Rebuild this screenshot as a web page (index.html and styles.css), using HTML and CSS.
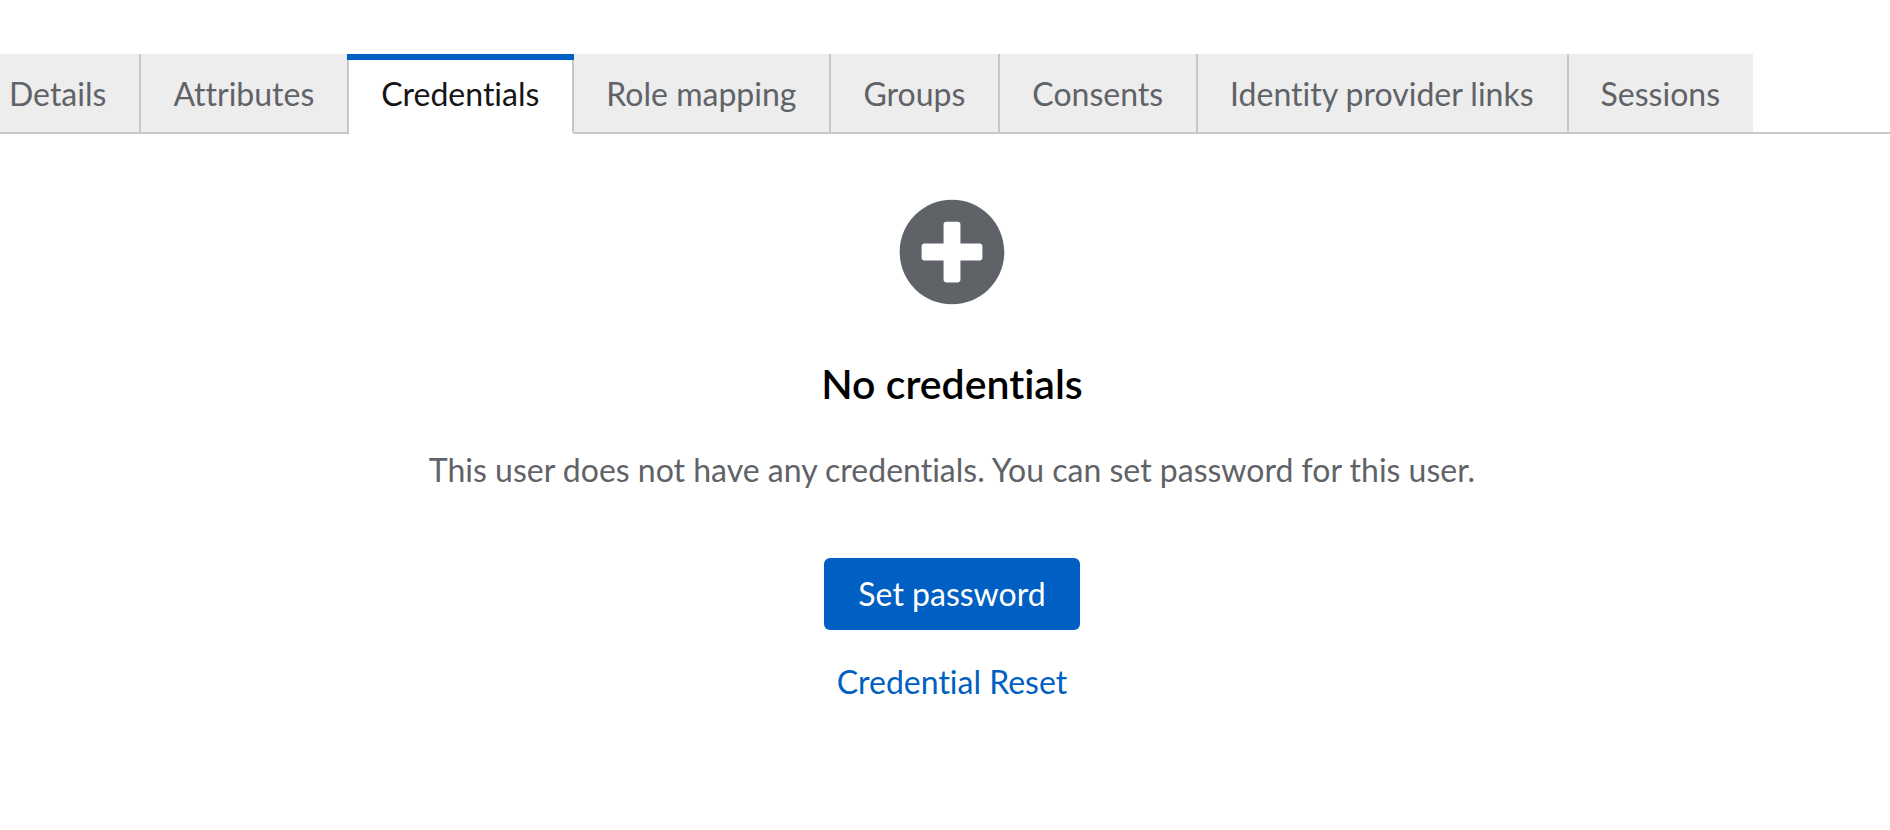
FILE: index.html
```html
<!DOCTYPE html>
<html lang="en">
<head>
    <meta charset="UTF-8">
    <meta name="viewport" content="width=device-width, initial-scale=1.0">
    <title>User credentials</title>
    <link rel="stylesheet" href="styles.css">
</head>
<body>
<nav class="tabs" aria-label="User details">
    <button type="button" class="tab">Details</button>
    <button type="button" class="tab">Attributes</button>
    <button type="button" class="tab current" aria-current="page">Credentials</button>
    <button type="button" class="tab">Role mapping</button>
    <button type="button" class="tab">Groups</button>
    <button type="button" class="tab">Consents</button>
    <button type="button" class="tab">Identity provider links</button>
    <button type="button" class="tab">Sessions</button>
</nav>

<main class="empty-state">
    <svg class="empty-icon" viewBox="0 0 512 512" aria-hidden="true">
        <path fill="currentColor" d="M256 8C119 8 8 119 8 256s111 248 248 248 248-111 248-248S393 8 256 8zm144 276c0 6.600-5.400 12-12 12h-92v92c0 6.600-5.400 12-12 12h-56c-6.600 0-12-5.400-12-12v-92h-92c-6.600 0-12-5.400-12-12v-56c0-6.600 5.400-12 12-12h92v-92c0-6.600 5.400-12 12-12h56c6.600 0 12 5.400 12 12v92h92c6.600 0 12 5.400 12 12v56z"/>
    </svg>
    <h1 class="empty-title">No credentials</h1>
    <p class="empty-text">This user does not have any credentials. You can set password for this user.</p>
    <button type="button" class="btn-primary">Set password</button>
    <button type="button" class="btn-link">Credential Reset</button>
</main>
</body>
</html>
```
FILE: styles.css
```css
* {
    box-sizing: border-box;
}
body {
    margin: 0;
    background-color: #fff;
    color: #151515;
    font-family: Lato, "Liberation Sans", sans-serif;
    font-size: 32px;
    font-variant-ligatures: none;
    line-height: 48px;
    overflow-x: hidden;
}
button {
    border: 0;
    font: inherit;
    font-variant-ligatures: none;
    cursor: pointer;
}
.tabs {
    display: flex;
    margin-top: 54px;
    margin-left: -23px; /* the strip is scrolled a little to the left */
    box-shadow: inset 0 -2px #c7c7c7;
}
.tab {
    flex: none;
    padding: 16px 33px 14px 32px;
    border-right: 2px solid #c7c7c7;
    border-bottom: 2px solid #c7c7c7;
    background-color: #ededed;
    color: #5f6368;
}
.tab:last-child {
    border-right: 0;
}
.tab.current {
    position: relative;
    border-bottom-color: #fff;
    background-color: #fff;
    color: #151515;
}
/* accent bar, covers the borders on both sides */
.tab.current::before {
    content: "";
    position: absolute;
    top: 0;
    left: -2px;
    right: -2px;
    height: 6px;
    background-color: #005fc3;
}
.empty-state {
    display: flex;
    flex-direction: column;
    align-items: center;
    padding: 64px 0 64px 14px;
    text-align: center;
}
.empty-icon {
    width: 108px;
    height: 108px;
    color: #5f6368;
}
.empty-title {
    margin: 48px 0 0;
    color: #000;
    font-size: 41px;
    font-weight: 600;
    line-height: 60px;
}
.empty-text {
    margin: 32px 0 0;
    color: #5f6368;
}
.btn-primary {
    margin-top: 64px;
    padding: 12px 34px;
    border-radius: 6px;
    background-color: #005fc3;
    color: #fff;
}
.btn-link {
    margin-top: 16px;
    padding: 12px 34px;
    background: none;
    color: #005fc3;
}
```
